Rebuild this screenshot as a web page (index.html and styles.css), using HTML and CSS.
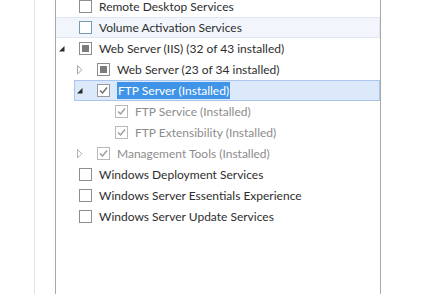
FILE: index.html
```html
<!DOCTYPE html>
<html>
<head>
<meta charset="utf-8">
<link rel="stylesheet" href="styles.css">
</head>
<body>
<div class="page">
  <div class="gutter"></div>
  <div class="gap"></div>
  <div class="panel">
    <ul class="tree">
      <li class="row l0"><span class="exp"></span><span class="cb"></span><span class="label">Remote Desktop Services</span></li>
      <li class="row l0 hover"><span class="exp"></span><span class="cb cb-hover"></span><span class="label">Volume Activation Services</span></li>
      <li class="row l0"><span class="exp"><svg width="6" height="6" viewBox="0 0 6 6"><polygon points="5.5,0 5.5,5.5 0,5.5" fill="#2a2a2a"/></svg></span><span class="cb cb-partial"></span><span class="label">Web Server (IIS) (32 of 43 installed)</span></li>
      <li class="row l1"><span class="exp"><svg width="6" height="10" viewBox="0 0 6 10"><polygon points="0.5,0.5 4.8,4.8 0.5,9.1" fill="none" stroke="#a6a6a6" stroke-width="1"/></svg></span><span class="cb cb-partial"></span><span class="label">Web Server (23 of 34 installed)</span></li>
      <li class="row l1 selected"><span class="exp"><svg width="6" height="6" viewBox="0 0 6 6"><polygon points="5.5,0 5.5,5.5 0,5.5" fill="#2a2a2a"/></svg></span><span class="cb cb-check"><svg width="11" height="11" viewBox="0 0 11 11"><polyline points="2,5.5 4.5,8 9,2.5" fill="none" stroke="#6a6a6a" stroke-width="1.4"/></svg></span><span class="label"><span class="sel">FTP Server (Installed)</span></span></li>
      <li class="row l2 disabled"><span class="exp"></span><span class="cb cb-check"><svg width="11" height="11" viewBox="0 0 11 11"><polyline points="2,5.5 4.5,8 9,2.5" fill="none" stroke="#9a9a9a" stroke-width="1.4"/></svg></span><span class="label">FTP Service (Installed)</span></li>
      <li class="row l2 disabled"><span class="exp"></span><span class="cb cb-check"><svg width="11" height="11" viewBox="0 0 11 11"><polyline points="2,5.5 4.5,8 9,2.5" fill="none" stroke="#9a9a9a" stroke-width="1.4"/></svg></span><span class="label">FTP Extensibility (Installed)</span></li>
      <li class="row l1 disabled"><span class="exp"><svg width="6" height="10" viewBox="0 0 6 10"><polygon points="0.5,0.5 4.8,4.8 0.5,9.1" fill="none" stroke="#b0b0b0" stroke-width="1"/></svg></span><span class="cb cb-check"><svg width="11" height="11" viewBox="0 0 11 11"><polyline points="2,5.5 4.5,8 9,2.5" fill="none" stroke="#9a9a9a" stroke-width="1.4"/></svg></span><span class="label">Management Tools (Installed)</span></li>
      <li class="row l0"><span class="exp"></span><span class="cb"></span><span class="label">Windows Deployment Services</span></li>
      <li class="row l0"><span class="exp"></span><span class="cb"></span><span class="label">Windows Server Essentials Experience</span></li>
      <li class="row l0"><span class="exp"></span><span class="cb"></span><span class="label">Windows Server Update Services</span></li>
    </ul>
  </div>
</div>
</body>
</html>
```
FILE: styles.css
```css
html, body {
  margin: 0;
  padding: 0;
  background: #ffffff;
}
.page {
  display: flex;
  height: 294px;
  overflow: hidden;
  font-family: "Lato", "Liberation Sans", sans-serif;
  font-size: 12px;
  color: #2e2e2e;
}
.gutter {
  width: 34px;
  border-right: 1px solid #e2e2e2;
}
.gap {
  width: 20px;
}
.panel {
  width: 324px;
  border-left: 1px solid #a9a9a9;
  border-right: 1px solid #a9a9a9;
}
.tree {
  list-style: none;
  margin: -4px 0 0 0;
  padding: 0;
}
.row {
  display: flex;
  align-items: center;
  height: 21px;
  padding-left: 3px;
  box-sizing: border-box;
  border: 1px solid transparent;
  border-left: 0;
  white-space: nowrap;
}
.l1 { margin-left: 18px; }
.l2 { margin-left: 36px; }
.exp {
  width: 20px;
  flex: none;
  display: flex;
  align-items: center;
}
.exp svg { display: block; }
.cb {
  width: 13px;
  height: 13px;
  box-sizing: border-box;
  border: 1px solid #8e8e8e;
  background: #ffffff;
  flex: none;
  margin-right: 7px;
  display: flex;
  align-items: center;
  justify-content: center;
}
.cb svg { display: block; }
.cb-hover { border-color: #6f9cb4; }
.cb-partial::after {
  content: "";
  width: 7px;
  height: 7px;
  background: #7b7b7b;
}
.cb-check { border-color: #9a9a9a; }
.disabled .cb-check { border-color: #b9b9b9; }
.label { line-height: 19px; }
.disabled .label { color: #8c8c8c; }
.hover {
  background: #f2f6fc;
  border-color: #dfe7f2;
  border-left: 1px solid #f2f6fc;
  padding-left: 2px;
}
.selected {
  background: #dce9fa;
  border: 1px solid #a9c7ec;
  padding-left: 2px;
}
.sel {
  background: #3f94e8;
  color: #ffffff;
  padding: 1px 1px;
}
```
